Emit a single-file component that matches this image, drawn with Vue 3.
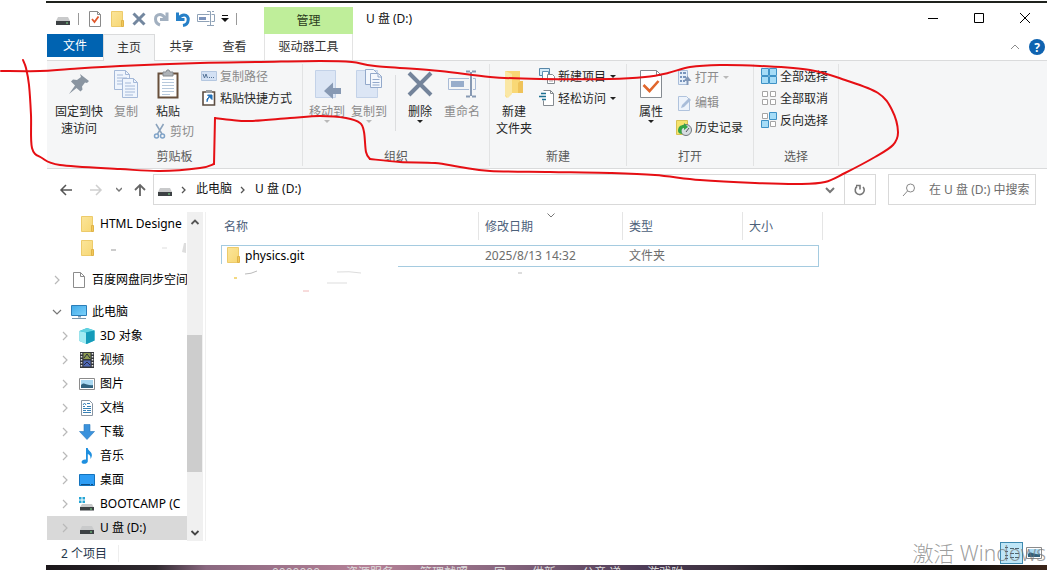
<script setup>
import { ref } from 'vue'

const search = ref('')

const tree = [
  { label: 'HTML Designe', icon: 'folder', level: 1 },
  { label: '', icon: 'folder', level: 1, smudge: true },
  { label: '百度网盘同步空间', icon: 'file', level: 0, arrow: 'right', spaced: true },
  { label: '此电脑', icon: 'pc', level: 0, arrow: 'down', spaced: true },
  { label: '3D 对象', icon: 'cube', level: 1, arrow: 'right' },
  { label: '视频', icon: 'video', level: 1, arrow: 'right' },
  { label: '图片', icon: 'picture', level: 1, arrow: 'right' },
  { label: '文档', icon: 'document', level: 1, arrow: 'right' },
  { label: '下载', icon: 'download', level: 1, arrow: 'right' },
  { label: '音乐', icon: 'music', level: 1, arrow: 'right' },
  { label: '桌面', icon: 'desktop', level: 1, arrow: 'right' },
  { label: 'BOOTCAMP (C', icon: 'bootcamp', level: 1, arrow: 'right' },
  { label: 'U 盘 (D:)', icon: 'drive', level: 1, arrow: 'right', selected: true },
]

const columns = [
  { label: '名称', cls: 'c-name' },
  { label: '修改日期', cls: 'c-date', sorted: true },
  { label: '类型', cls: 'c-type' },
  { label: '大小', cls: 'c-size' },
]

/* Smooth curve through a list of pen points */
function smooth(p) {
  let d = `M${p[0][0]} ${p[0][1]}`
  for (let i = 0; i < p.length - 1; i++) {
    const a = p[i - 1] || p[i], b = p[i], c = p[i + 1], e = p[i + 2] || c
    d += `C${b[0] + (c[0] - a[0]) / 6} ${b[1] + (c[1] - a[1]) / 6} ${c[0] - (e[0] - b[0]) / 6} ${c[1] - (e[1] - b[1]) / 6} ${c[0]} ${c[1]}`
  }
  return d
}
const pen = [
  smooth([[1, 71], [40, 71], [70, 69], [120, 66], [200, 63], [260, 62], [320, 61], [352, 62], [375, 66], [440, 71], [490, 77], [540, 79], [610, 79], [645, 77], [668, 73], [690, 67], [720, 65], [760, 66], [810, 70], [845, 80], [878, 93], [892, 110], [898, 132], [893, 145], [875, 157], [845, 173], [825, 182], [800, 184], [755, 183], [700, 180], [655, 175], [610, 173], [550, 172], [490, 171], [460, 167], [435, 163], [400, 162], [370, 159]]),
  smooth([[370, 159], [366, 152], [364, 132], [360, 123], [346, 118], [320, 116], [290, 118], [250, 121], [232, 120], [215, 118]]),
  'M215 118L214 164',
  smooth([[214, 164], [200, 168], [160, 171], [120, 169], [60, 165], [42, 158], [32, 148], [31, 115], [29, 85], [26, 68], [23, 60]]),
]
</script>

<template>
  <div class="page">
    <svg class="defs" width="0" height="0" aria-hidden="true">
      <defs>
        <linearGradient id="gFolder" x1="0" y1="0" x2="1" y2="1">
          <stop offset="0" stop-color="#fbe59a" /><stop offset="1" stop-color="#f7d774" />
        </linearGradient>
        <linearGradient id="gBlue" x1="0" y1="0" x2="1" y2="1">
          <stop offset="0" stop-color="#3fa9e8" /><stop offset="1" stop-color="#7fd3fb" />
        </linearGradient>
      </defs>
      <symbol id="i-drive" viewBox="0 0 16 16">
        <path d="M3 6h10l2 4H1z" fill="#c9cacb" /><path d="M1 10h14v4H1z" fill="#3d4144" /><path d="M11 12h2" stroke="#7de08a" />
      </symbol>
      <symbol id="i-check" viewBox="0 0 16 16">
        <path d="M2.500.500h8l3 3v12h-11z" fill="#fff" stroke="#8a8a8a" /><path d="M10.500.500v3h3" fill="none" stroke="#8a8a8a" /><path d="M5 8l2.500 3L11.500 5.500" fill="none" stroke="#e0582c" stroke-width="1.800" />
      </symbol>
      <symbol id="i-folder" viewBox="0 0 16 16">
        <path d="M2.500.500h11v15h-11z" fill="url(#gFolder)" stroke="#edcb6b" /><path d="M12.500 9.500h2v6h-2z" fill="#f3c85a" stroke="#dfb348" />
      </symbol>
      <symbol id="i-x" viewBox="0 0 16 16"><path d="M2.500 2.500l11 11M13.500 2.500l-11 11" stroke="#73879f" stroke-width="3" /></symbol>
      <symbol id="i-redo" viewBox="0 0 16 16"><path d="M7 14C1 12 1 3.500 7 3.500c3 0 4 2 5.500 4M14 1.500v7H7" fill="none" stroke="#a2b0c0" stroke-width="3" /></symbol>
      <symbol id="i-undo" viewBox="0 0 16 16"><path d="M8 14.500c6.500-1 7-10.500 1-10.500-3 0-4 1.500-6 4M2.500 1.500v7H9.500" fill="none" stroke="#2680c8" stroke-width="3" /></symbol>
      <symbol id="i-rename" viewBox="0 0 18 16"><path d="M12.500 3.500h-12v7h12M14.500 3.500h3v7h-3M10 .500h3.500M15 .500h2M13.500.500v14M10 14.500h7" fill="none" stroke="#8fa2b7" /><path d="M2 6h7v3H2z" fill="#7c93bb" /></symbol>
      <symbol id="i-file" viewBox="0 0 16 16"><path d="M2.500.500h7l4 4v11h-11z" fill="#fff" stroke="#8c8c8c" /><path d="M9.500.500v4h4" fill="none" stroke="#8c8c8c" /></symbol>
      <symbol id="i-pc" viewBox="0 0 16 16"><path d="M.500 1.500h15v10H.500z" fill="url(#gBlue)" stroke="#2c7eb8" /><path d="M7 12h3v1.500H7z" fill="#7f9db5" /><path d="M1 14.500h14" stroke="#7995aa" /></symbol>
      <symbol id="i-cube" viewBox="0 0 16 16"><path d="M8 0l7.500 2.500v10L8 16 .500 13V3z" fill="#29b6cf" /><path d="M.500 3L7 4.500V16L.500 13z" fill="#a2ebf2" /><path d="M.500 3L8 0l7.500 2.500L7 4.500z" fill="#61d3e1" /><path d="M7 4.500l8.500-2v10L7 16z" fill="#159bb9" /></symbol>
      <symbol id="i-video" viewBox="0 0 16 16"><path d="M1 0h14v16H1z" fill="#34373c" /><path d="M2.500 1v15M13.500 1v15" stroke="#e6e6e6" stroke-width="1.500" stroke-dasharray="1.500 1.500" /><path d="M4.500 1h7v6h-7z" fill="#8d9b51" /><path d="M4.500 8.500h7v6h-7z" fill="#4e68b6" /><path d="M5 6l3-4 3 4M5 13l3-3 3 3" fill="none" stroke="#262c43" /></symbol>
      <symbol id="i-picture" viewBox="0 0 16 16"><path d="M.500 2.500h15v11H.500z" fill="#fff" stroke="#8b8b8b" /><path d="M2 4h12v8H2z" fill="#a9d8f1" /><path d="M2 9c3-3 4-1 6-.500s4 1 6 .500v3H2z" fill="#31627e" /></symbol>
      <symbol id="i-document" viewBox="0 0 16 16"><path d="M2.500.500h8l3 3v12h-11z" fill="#fff" stroke="#8995a2" /><path d="M8 3.500h3M4 6.500h2m2 0h4M4 8.500h8M4 10.500h3m1 0h4M4 12.500h8" stroke="#3881b6" /><path d="M4 5l1.500-2L7 5" fill="none" stroke="#3881b6" /></symbol>
      <symbol id="i-download" viewBox="0 0 16 16"><path d="M5 .500h6v7h4.500L8 15.500.500 7.500H5z" fill="#3b92dc" stroke="#2979bd" stroke-width=".600" /></symbol>
      <symbol id="i-music" viewBox="0 0 16 16"><path d="M7 0h1.800c0 3 4.700 3.500 4 8-.3 1.500-1 2.500-1.500 3 .7-3-.8-4.500-2.500-5v7.500c-.4 2.500-5.600 3.300-6.200.8-.2-2 2.200-3.300 4.400-2.800z" fill="#1e8fdf" /></symbol>
      <symbol id="i-desktop" viewBox="0 0 16 16"><path d="M.500 2.500h15v11H.500z" fill="#2e9df4" stroke="#1373bd" /><path d="M2 12.500h9m1 0h2" stroke="#0d4e87" /></symbol>
      <symbol id="i-bootcamp" viewBox="0 0 16 16"><path d="M0 1h2.500v2.500H0zM3.500 1H6v2.500H3.500zM0 4.500h2.500V7H0zM3.500 4.500H6V7H3.500z" fill="#25a5d5" /><path d="M3 8h10l1.500 3H1z" fill="#c9cacb" /><path d="M1 11h14v3.500H1z" fill="#3d4144" /><path d="M11 13h2" stroke="#7de08a" /></symbol>
    </svg>

    <div class="window">
      <header class="title">
        <div class="quick">
          <svg class="s16"><use href="#i-drive" /></svg>
          <i class="bar"></i>
          <button aria-label="属性"><svg class="s16"><use href="#i-check" /></svg></button>
          <button aria-label="新建文件夹"><svg class="s16"><use href="#i-folder" /></svg></button>
          <button aria-label="删除"><svg class="s16"><use href="#i-x" /></svg></button>
          <button aria-label="恢复"><svg class="s16"><use href="#i-redo" /></svg></button>
          <button aria-label="撤消"><svg class="s16"><use href="#i-undo" /></svg></button>
          <button aria-label="重命名"><svg class="s18"><use href="#i-rename" /></svg></button>
          <button class="more" aria-label="自定义"><svg width="8" height="8"><path d="M1 .500h6" stroke="#111" /><path d="M0 3h8L4 7z" fill="#111" /></svg></button>
          <i class="bar"></i>
        </div>
        <div class="manage">管理</div>
        <h1>U 盘 (D:)</h1>
        <div class="controls">
          <button aria-label="最小化"><svg width="12" height="12"><path d="M1 5.500h10" stroke="#000" /></svg></button>
          <button aria-label="最大化"><svg width="12" height="12"><path d="M1.500.500h9v9h-9z" fill="none" stroke="#000" /></svg></button>
          <button aria-label="关闭"><svg width="12" height="12"><path d="M1 0l10 10M11 0L1 10" stroke="#000" /></svg></button>
        </div>
      </header>

      <nav class="tabs">
        <button class="tab file">文件</button>
        <button class="tab active">主页</button>
        <button class="tab">共享</button>
        <button class="tab">查看</button>
        <button class="tab tools">驱动器工具</button>
        <span class="help">
          <button aria-label="折叠"><svg width="10" height="8"><path d="M1 6l4-4 4 4" fill="none" stroke="#8c8c8c" /></svg></button>
          <button class="q" aria-label="帮助">?</button>
        </span>
      </nav>

      <section class="ribbon">
        <div class="group g-clip">
          <div class="tools-row">
            <button class="big pin">
              <svg width="22" height="22" viewBox="0 0 22 22"><path d="M12 1l9 7-2 2-2-.500-3 4 .500 3-2 2-4-3.500L1 21l6-8.500-4-4 2-2 4 .500 4-3z" fill="#8a95a1" /></svg>
              <span>固定到快<br>速访问</span>
            </button>
            <button class="big copy off">
              <svg width="26" height="30" viewBox="0 0 26 30"><path d="M1.500 1.500h11l4 4v15h-15z" fill="#eff5fd" stroke="#a5b9d8" /><path d="M12.500 1.500v4h4M4 6h6M4 9h10M4 12h10M4 15h10" fill="none" stroke="#a5b9d8" /><path d="M9.500 9.500h11l4 4v15h-15z" fill="#eff5fd" stroke="#a5b9d8" /><path d="M20.500 9.500v4h4M12 14h6M12 17h10M12 20h10M12 23h10M12 26h8" fill="none" stroke="#a5b9d8" /></svg>
              <span>复制</span>
            </button>
            <div class="paste">
              <button class="big">
                <svg width="22" height="30" viewBox="0 0 22 30"><path d="M1.500 4.500h19v24h-19z" fill="#fff" stroke="#68503c" stroke-width="2" /><path d="M6 3h3l1-2h2l1 2h3v4H6z" fill="#aeb3b8" stroke="#858a8f" /><path d="M5 10.500h12M5 13.500h12M5 16.500h12M5 19.500h12M5 22.500h12M5 25.500h8" stroke="#b7c9dc" /></svg>
                <span>粘贴</span>
              </button>
              <button class="small off"><svg width="14" height="16" viewBox="0 0 14 16"><path d="M3 1l6 10M10.500 1l-6 10" stroke="#8ba3bd" stroke-width="1.500" /><circle cx="3.500" cy="13" r="2" fill="none" stroke="#7fa3c8" stroke-width="1.500" /><circle cx="9.500" cy="13" r="2" fill="none" stroke="#7fa3c8" stroke-width="1.500" /></svg>剪切</button>
            </div>
            <div class="stack">
              <button class="small off"><svg class="s16" viewBox="0 0 16 16"><path d="M.500 3.500h15v9H.500z" fill="#d3e1f4" stroke="#b4c7e0" /><path d="M2 6l1.500 4L5 6l1.500 4M8 9.500h1m1 0h1m1 0h1" fill="none" stroke="#557396" /></svg>复制路径</button>
              <button class="small"><svg class="s16" viewBox="0 0 16 16"><path d="M2 2h11.500v13H2z" fill="#fff" stroke="#5c4d42" stroke-width="1.600" /><path d="M5 0h6v3H5z" fill="#9a9da0" /><path d="M6 12V9l3-3M6.500 5H11v4.500z" fill="#2270b8" stroke="#2270b8" /></svg>粘贴快捷方式</button>
            </div>
          </div>
          <h2>剪贴板</h2>
        </div>

        <div class="group g-org">
          <div class="tools-row">
            <button class="big w42 off">
              <svg width="28" height="30" viewBox="0 0 28 30"><path d="M2.500 1.500h20v27h-20z" fill="#dce6f5" stroke="#c3d2e8" /><path d="M28 19h-8v-5.500L11 22l9 8v-5h8z" fill="#8799b3" /></svg>
              <span>移动到</span><i class="caret"></i>
            </button>
            <button class="big w42 off">
              <svg width="28" height="30" viewBox="0 0 28 30"><path d="M1.500 1.500h21v27h-21z" fill="#dce6f5" stroke="#c3d2e8" /><path d="M10.500.500h8l3 3v12h-11z" fill="#f3f7fd" stroke="#93a9cb" /><path d="M15.500 4.500h8l3 3v11h-11z" fill="#f3f7fd" stroke="#93a9cb" /><path d="M23 5v3h4M17.500 10.500h7M17.500 13.500h7M17.500 16h7" fill="none" stroke="#93a9cb" /></svg>
              <span>复制到</span><i class="caret"></i>
            </button>
            <i class="split"></i>
            <button class="big w42">
              <svg width="26" height="26" viewBox="0 0 26 26"><path d="M2 2l22 22M24 2L2 24" stroke="#74849b" stroke-width="4" /></svg>
              <span>删除</span><i class="caret"></i>
            </button>
            <button class="big w42 off">
              <svg width="28" height="28" viewBox="0 0 28 28"><path d="M21 8.500H.500v11H21M25 8.500h2.500v11H25" fill="none" stroke="#a9bbd6" /><path d="M3 11h13v6H3z" fill="#98adcb" /><path d="M18 1.500h4m2 0h4M23 2v24M18 26.500h4m2 0h4" stroke="#8799b3" stroke-width="2" /></svg>
              <span>重命名</span>
            </button>
          </div>
          <h2>组织</h2>
        </div>

        <div class="group g-new">
          <div class="tools-row">
            <button class="big w42">
              <svg width="22" height="30" viewBox="0 0 22 30"><path d="M2 2h15v10h3v12H7L4 29l-2-2z" fill="#f9d876" /><path d="M2 2l7 3v20l-4 4-3-3z" fill="#fae7a5" /><path d="M17 12h3v12h-5V14z" fill="#efc35a" /></svg>
              <span>新建<br>文件夹</span>
            </button>
            <div class="stack">
              <button class="small"><svg class="s16" viewBox="0 0 16 16"><path d="M.500.500h10v7H.500z" fill="#d5ecfa" stroke="#5787a8" /><path d="M3.500 3.500h6v8h-6z" fill="#fff" stroke="#5f91b5" /><path d="M8.500 6.500h5l2 2v7h-7z" fill="#fff" stroke="#858b91" /><path d="M10 11h4M10 13h4" stroke="#a5aab0" /></svg>新建项目<i class="caret"></i></button>
              <button class="small"><svg class="s16" viewBox="0 0 16 16"><path d="M4.500.500h7l3 3v12h-10v-5" fill="#fff" stroke="#858b91" /><path d="M11.500.500v3h3" fill="none" stroke="#858b91" /><path d="M2 3.500h5M0 6.500h7M3 9.500h4" stroke="#1f7192" stroke-width="1.500" /></svg>轻松访问<i class="caret"></i></button>
            </div>
          </div>
          <h2>新建</h2>
        </div>

        <div class="group g-open">
          <div class="tools-row">
            <button class="big w42">
              <svg width="22" height="30" viewBox="0 0 22 30"><path d="M.500 1.500h16l5 5v22H.500z" fill="#fff" stroke="#858b91" /><path d="M16.500 1.500v5h5" fill="none" stroke="#858b91" /><path d="M3.500 16l6 6 9-10" fill="none" stroke="#e0662c" stroke-width="2.600" /></svg>
              <span>属性</span><i class="caret"></i>
            </button>
            <div class="stack loose">
              <button class="small off"><svg class="s16" viewBox="0 0 16 16"><path d="M2.500.500h9v14h-9z" fill="#e6effa" stroke="#a9bdd9" /><path d="M4 3h2m1 0h3M4 7h2m1 0h3M4 11h2m1 0h2" stroke="#7995bd" stroke-width="2" /><path d="M11.500 15v-5" stroke="#8096b7" stroke-width="2" /><path d="M7.500 11l4-5 4 5z" fill="#8096b7" /></svg>打开<i class="caret"></i></button>
              <button class="small off"><svg class="s16" viewBox="0 0 16 16"><path d="M2.500 1.500h8l3 3v11h-11z" fill="#edf3fb" stroke="#b0c3dd" /><path d="M5 13l1-3 7-7 2 2-7 7z" fill="#a9bdd9" /></svg>编辑</button>
              <button class="small"><svg class="s16" viewBox="0 0 16 16"><path d="M.500.500h11v14H.500z" fill="#f6e36c" stroke="#d8c254" /><circle cx="10" cy="10" r="5.500" fill="#d6dce0" stroke="#70777d" /><path d="M2 11c0-4 2-6 6-6V3l4 4-4 3V8c-2 0-3 2-2 6-2 0-4-1-4-3z" fill="#37a446" /><path d="M10 12l3-4" fill="none" stroke="#50575d" /></svg>历史记录</button>
            </div>
          </div>
          <h2>打开</h2>
        </div>

        <div class="group g-select">
          <div class="stack">
            <button class="small"><svg class="s16" viewBox="0 0 16 16"><path d="M.500.500h7v7h-7zM8.500.500h7v7h-7zM.500 8.500h7v7h-7zM8.500 8.500h7v7h-7z" fill="#a5dcf7" stroke="#3e92c6" /></svg>全部选择</button>
            <button class="small"><svg class="s16" viewBox="0 0 16 16"><path d="M1.500 1.500h5v5h-5zM9.500 1.500h5v5h-5zM1.500 9.500h5v5h-5zM9.500 9.500h5v5h-5z" fill="#fff" stroke="#a5a5a5" /></svg>全部取消</button>
            <button class="small"><svg class="s16" viewBox="0 0 16 16"><path d="M1.500 1.500h5v5h-5zM9.500 9.500h5v5h-5z" fill="#fff" stroke="#a5a5a5" /><path d="M8.500.500h7v7h-7zM.500 8.500h7v7h-7z" fill="#a5dcf7" stroke="#3e92c6" /></svg>反向选择</button>
          </div>
          <h2>选择</h2>
        </div>
      </section>

      <div class="address-row">
        <div class="nav">
          <button aria-label="后退"><svg width="14" height="14"><path d="M13 7H2M7 2L2 7l5 5" fill="none" stroke="#555" stroke-width="1.500" /></svg></button>
          <button aria-label="前进"><svg width="14" height="14"><path d="M1 7h11M7 2l5 5-5 5" fill="none" stroke="#cfcfcf" stroke-width="1.500" /></svg></button>
          <button aria-label="最近位置"><svg width="6" height="14"><path d="M0 5l3 3 3-3" fill="none" stroke="#777" stroke-width="1.500" /></svg></button>
          <button aria-label="上移"><svg width="14" height="14"><path d="M7 13V2M2 7l5-5 5 5" fill="none" stroke="#666" stroke-width="1.800" /></svg></button>
        </div>
        <div class="address">
          <svg class="s16"><use href="#i-drive" /></svg>
          <svg class="crumb" width="6" height="8"><path d="M1 1l3 3-3 3" fill="none" stroke="#555" stroke-width="1.300" /></svg>
          <a href="#">此电脑</a>
          <svg class="crumb" width="6" height="8"><path d="M1 1l3 3-3 3" fill="none" stroke="#555" stroke-width="1.300" /></svg>
          <a href="#">U 盘 (D:)</a>
          <button class="drop" aria-label="展开"><svg width="10" height="8"><path d="M1 2l4 4 4-4" fill="none" stroke="#777" stroke-width="2" /></svg></button>
          <button class="refresh" aria-label="刷新"><svg width="12" height="12"><path d="M3 2.500A4.500 4.500 0 1 0 9 3M2 1.500h4v4" fill="none" stroke="#777" stroke-width="1.600" /></svg></button>
        </div>
        <label class="search">
          <svg width="14" height="14"><circle cx="8.500" cy="5" r="4" fill="none" stroke="#888" /><path d="M5.500 8L1 13" stroke="#888" /></svg>
          <input v-model="search" type="text" placeholder="在 U 盘 (D:) 中搜索" aria-label="搜索">
        </label>
      </div>

      <main class="body">
        <aside class="side">
          <ul class="tree">
            <li v-for="(n, i) in tree" :key="i" :class="['node', 'l' + n.level, { sel: n.selected, spaced: n.spaced }]">
              <svg class="arrow" width="10" height="10">
                <path v-if="n.arrow === 'right'" d="M3 1l4 4-4 4" fill="none" stroke="#b9b9b9" stroke-width="1.200" />
                <path v-if="n.arrow === 'down'" d="M1 3l4 4 4-4" fill="none" stroke="#777" stroke-width="1.200" />
              </svg>
              <svg class="s16"><use :href="'#i-' + n.icon" /></svg>
              <span>{{ n.label }}</span>
              <svg v-if="n.smudge" class="smudge" width="86" height="16"><path d="M11 10h5" stroke="#999" /><path d="M62 8h5" stroke="#ddd" /><path d="M82 12l2-9h2v10z" fill="#ddd" /></svg>
            </li>
          </ul>
          <div class="scroll">
            <svg width="10" height="8"><path d="M1.500 6L5 2.500 8.500 6" fill="none" stroke="#555" stroke-width="1.800" /></svg>
            <div class="thumb"></div>
            <svg width="10" height="8"><path d="M1.500 2L5 5.500 8.500 2" fill="none" stroke="#444" stroke-width="1.800" /></svg>
          </div>
        </aside>

        <div class="files">
          <table>
            <thead>
              <tr>
                <th v-for="c in columns" :key="c.label" :class="c.cls">
                  {{ c.label }}
                  <svg v-if="c.sorted" class="sort" width="8" height="5"><path d="M.500.500L4 4 7.500.500" fill="none" stroke="#777" /></svg>
                </th>
              </tr>
            </thead>
            <tbody>
              <tr>
                <td><span class="name"><svg class="s16"><use href="#i-folder" /></svg>physics.git</span></td>
                <td>2025/8/13 14:32</td>
                <td>文件夹</td>
                <td></td>
              </tr>
            </tbody>
          </table>
          <svg class="marks" width="310" height="30">
            <path d="M24 7q6 0 12-3" stroke="#bbb" fill="none" /><path d="M13 11h3" stroke="#f3d982" stroke-width="2" /><path d="M116 5q12-1 24 1M106 16h20" stroke="#ddd" fill="none" /><path d="M82 24h6" stroke="#f0b8b8" /><path d="M297 6h4" stroke="#bbb" />
          </svg>
        </div>
      </main>

      <footer class="status">
        <span class="count">2 个项目</span>
        <div class="views">
          <button class="on" aria-label="详细信息"><svg width="16" height="14"><path d="M1 1.500h3M1 5.500h3M1 9.500h3M1 12.500h3M6 2.500h4M11 2.500h4M6 7.500h4M11 7.500h4M6 11.500h4M11 11.500h4" stroke="#4e6470" /></svg></button>
          <button aria-label="大图标"><svg class="s16"><use href="#i-picture" /></svg></button>
        </div>
        <div class="activate">激活 Windows</div>
      </footer>
      <div class="wallpaper"><span>0000000</span><span>资源服务</span><span>管理就照</span><span>回</span><span>供新</span><span>公帝 递</span><span>游戏附</span></div>
    </div>

    <svg class="pen" width="1048" height="570" aria-hidden="true">
      <path v-for="(d, i) in pen" :key="i" :d="d" />
    </svg>
  </div>
</template>

<style>
body { margin: 0; background: #fff; }
</style>

<style scoped>
.page { position: relative; min-height: 100vh; box-sizing: border-box; padding: 1px 1px 0 46px; display: flex; overflow: hidden; font: 12px/17px "Noto Sans", "Noto Sans CJK SC", sans-serif; color: #222; }
.defs { position: absolute; }
.window { flex: 1; min-width: 0; border-top: 2px solid #1f221d; display: flex; flex-direction: column; }
button { border: 0; padding: 0; margin: 0; background: none; font: inherit; color: inherit; display: flex; align-items: center; justify-content: center; white-space: nowrap; }
svg { display: block; flex: none; }
h1, h2 { margin: 0; font: inherit; }
.s16 { width: 16px; height: 16px; }
.s18 { width: 18px; height: 16px; }

.title { height: 31px; display: flex; color: #111; }
.quick { width: 218px; box-sizing: border-box; padding: 0 0 0 9px; display: flex; align-items: center; gap: 6px; }
.bar { width: 1px; height: 12px; margin: 0 2px 0 1px; background: #999; }
.manage { width: 89px; margin-top: 4px; background: #bfee9a; line-height: 27px; text-align: center; color: #2c3d20; }
h1 { padding: 7px 0 0 13px; }
.controls { margin-left: auto; display: flex; padding-right: 16px; gap: 34px; }

.tabs { height: 26px; display: flex; padding-left: 1px; color: #333; }
.tab { width: 53px; height: 26px; line-height: 24px; }
.file { width: 56px; height: 23px; background: #0063b1; color: #fff; }
.active { width: 52px; box-sizing: border-box; height: 27px; background: #f5f6f7; border: 1px solid #dadbdc; border-bottom: 0; z-index: 1; }
.tools { width: 89px; box-sizing: border-box; margin-left: 3px; border: solid #e3e3e3; border-width: 0 1px; }
.help { margin-left: auto; display: flex; align-items: center; gap: 9px; padding-right: 2px; }
.q { width: 16px; height: 16px; border-radius: 50%; background: #0f63b0; color: #fff; font-weight: 700; }

.ribbon { display: flex; background: #f5f6f7; border: solid #dadbdc; border-width: 1px 0; margin-left: 1px; height: 107px; }
.group { box-sizing: border-box; margin: 3px 0 2px; padding-top: 1px; border-right: 1px solid #e2e3e4; display: flex; flex-direction: column; justify-content: space-between; color: #262626; }
.group h2 { text-align: center; color: #5a5a5a; line-height: 18px; }
.g-clip { width: 256px; }
.g-org { width: 187px; }
.g-new { width: 137px; }
.g-open { width: 127px; }
.g-select { width: 85px; }
.tools-row { display: flex; align-items: flex-start; }
.g-clip .tools-row { padding-left: 4px; }
.g-org .tools-row, .g-new .tools-row, .g-open .tools-row { padding-left: 3px; }
.g-select .stack { margin-left: 7px; }
.big { flex-direction: column; justify-content: flex-start; margin-top: 4px; }
.big > svg { height: 30px; margin: 0 0 4px; }
.w42 { width: 42px; }
.pin { width: 56px; }
.copy { width: 38px; }
.paste { width: 42px; margin-left: 8px; }
.paste .big { width: 30px; }
.off { color: #8b8b8b; }
.caret { border: solid transparent; border-width: 3px 3px 0; border-top-color: #222; width: 0; }
.off .caret { border-top-color: #b9b9b9; }
.small { height: 22px; gap: 3px; }
.small .caret { margin-left: 1px; }
.stack { display: flex; flex-direction: column; align-items: flex-start; }
.g-clip .stack { margin-left: 6px; }
.g-new .stack, .g-open .stack { margin-left: 4px; }
.loose .small { height: 25px; }
.split { width: 1px; height: 56px; margin: 10px 3px 0 5px; background: #dcdddf; }

.address-row { display: flex; align-items: center; margin: 5px 11px 0 0; height: 31px; }
.nav { width: 107px; box-sizing: border-box; display: flex; align-items: center; justify-content: space-between; padding: 0 6px 0 13px; }
.nav button:nth-child(2) { margin-left: 5px; }
.nav button:nth-child(3) { margin-left: 3px; }
.address { flex: 1; box-sizing: border-box; height: 31px; border: 1px solid #d9d9d9; display: flex; align-items: center; padding-left: 3px; color: #111; }
.address a { color: inherit; text-decoration: none; padding-bottom: 2px; }
.crumb { margin: 0 9px 0 8px; }
.drop { margin-left: auto; width: 28px; height: 29px; }
.refresh { width: 31px; height: 29px; border-left: 1px solid #d9d9d9; }
.search { width: 148px; height: 31px; box-sizing: border-box; margin-left: 12px; border: 1px solid #d9d9d9; display: flex; align-items: center; padding-left: 13px; gap: 13px; overflow: hidden; }
.search input { flex: 1; min-width: 0; border: 0; padding: 0; outline: 0; background: none; font: inherit; height: 20px; }
.search input::placeholder { color: #6d6d6d; opacity: 1; }

.body { flex: 1; display: flex; padding: 7px 0 0 1px; }
.side { width: 156px; display: flex; border-right: 2px solid #fff; box-shadow: 1px 0 #f0f0f0; }
.tree { flex: 1; min-width: 0; list-style: none; margin: 0; padding: 0; }
.node { position: relative; height: 24px; display: flex; align-items: center; overflow: hidden; white-space: nowrap; color: #000; padding-left: 5px; }
.node span { margin-left: 5px; padding-bottom: 2px; }
.node .arrow { margin-right: 9px; }
.l1 { padding-left: 13px; }
.spaced { margin-top: 8px; }
.sel { background: #d9d9d9; }
.smudge { position: absolute; left: 53px; top: 4px; }
.scroll { width: 16px; background: #f0f0f0; display: flex; flex-direction: column; align-items: center; justify-content: space-between; padding: 6px 0 4px; box-sizing: border-box; }
.thumb { align-self: flex-start; width: 15px; height: 137px; margin-top: 51px; background: #cdcdcd; }

.files { flex: 1; padding-left: 16px; position: relative; }
table { border-collapse: separate; border-spacing: 0; table-layout: fixed; width: 602px; }
th { position: relative; height: 28px; padding: 0 0 0 6px; text-align: left; font-weight: 400; color: #4c607a; border-right: 1px solid #e5e5e5; }
th.c-name { width: 254px; padding-left: 3px; }
th.c-date { width: 137px; }
th.c-type { width: 113px; }
.sort { position: absolute; left: 68px; top: 1px; }
tbody tr { position: relative; }
td { height: 20px; padding: 5px 0 2px 6px; color: #6d6d6d; }
td:first-child { padding-left: 4px; }
.name { display: flex; align-items: center; gap: 4px; color: #000; }
td:first-child::before { content: ""; position: absolute; inset: 5px 4px 0 0; border: 1px solid #a5cbe0; pointer-events: none; }
td:first-child::after { content: ""; position: absolute; left: 0; bottom: 0; width: 177px; height: 3px; background: #fff; }
.marks { position: absolute; left: 16px; top: 55px; }

.status { position: relative; height: 24px; display: flex; align-items: center; justify-content: space-between; padding: 0 5px 0 15px; color: #27374c; }
.count { padding-right: 11px; border-right: 1px solid #eee; }
.views { display: flex; align-items: center; gap: 3px; }
.views button { width: 16px; height: 22px; }
.views .on { box-sizing: border-box; width: 23px; border: 1px solid #3e8ab0; background: #bfe6f7; }
.activate { position: absolute; right: 1px; bottom: 0; font: 300 21px/24px "Noto Sans", "Noto Sans CJK SC", sans-serif; color: rgba(115, 115, 115, .7); white-space: nowrap; }
.wallpaper { height: 5px; overflow: hidden; padding-left: 226px; display: flex; gap: 26px; color: #ddd; line-height: 15px; background: linear-gradient(90deg, #1b171a 0, #302a30 11%, #8a6880 16%, #b58197 32%, #8a6880 45%, #4d3b56 60%, #3b303d 68%, #17171a 76%, #15120f 92%, #3b2419 100%); }

.pen { position: absolute; left: 0; top: 0; pointer-events: none; fill: none; stroke: #e60f14; stroke-width: 2; stroke-linecap: round; z-index: 2; }
</style>
